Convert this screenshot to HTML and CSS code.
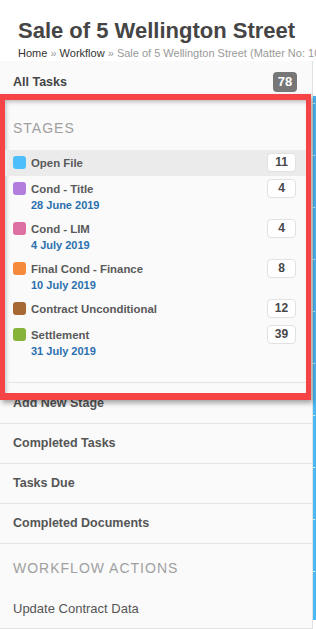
FILE: index.html
```html
<!DOCTYPE html>
<html lang="en">
<head>
    <meta charset="UTF-8">
    <meta name="viewport" content="width=device-width, initial-scale=1.0">
    <title>Sale of 5 Wellington Street - Workflow</title>
    <link rel="stylesheet" href="styles.css">
</head>
<body>
    <div class="page-head">
        <h1>Sale of 5 Wellington Street</h1>
        <div class="breadcrumb">
            <a href="#">Home</a> <span class="sep">&raquo;</span>
            <a href="#">Workflow</a> <span class="sep">&raquo;</span>
            <span class="current">Sale of 5 Wellington Street (Matter No: 1042)</span>
        </div>
    </div>

    <div class="layout">
        <nav class="sidebar">
            <div class="all-tasks">
                <span>All Tasks</span>
                <span class="total">78</span>
            </div>

            <!-- Stages dropdown, opened -->
            <div class="stages-popover">
                <div class="stages-panel">
                    <div class="section-title">Stages</div>
                    <ul class="stage-list">
                        <li class="stage active">
                            <span class="swatch blue"></span>
                            <div class="stage-text"><div class="stage-name">Open File</div></div>
                            <span class="count">11</span>
                        </li>
                        <li class="stage">
                            <span class="swatch purple"></span>
                            <div class="stage-text">
                                <div class="stage-name">Cond - Title</div>
                                <div class="stage-date">28 June 2019</div>
                            </div>
                            <span class="count">4</span>
                        </li>
                        <li class="stage">
                            <span class="swatch pink"></span>
                            <div class="stage-text">
                                <div class="stage-name">Cond - LIM</div>
                                <div class="stage-date">4 July 2019</div>
                            </div>
                            <span class="count">4</span>
                        </li>
                        <li class="stage">
                            <span class="swatch orange"></span>
                            <div class="stage-text">
                                <div class="stage-name">Final Cond - Finance</div>
                                <div class="stage-date">10 July 2019</div>
                            </div>
                            <span class="count">8</span>
                        </li>
                        <li class="stage">
                            <span class="swatch brown"></span>
                            <div class="stage-text"><div class="stage-name">Contract Unconditional</div></div>
                            <span class="count">12</span>
                        </li>
                        <li class="stage">
                            <span class="swatch green"></span>
                            <div class="stage-text">
                                <div class="stage-name">Settlement</div>
                                <div class="stage-date">31 July 2019</div>
                            </div>
                            <span class="count">39</span>
                        </li>
                    </ul>
                    <div class="panel-foot"></div>
                </div>
            </div>

            <div class="nav-item add-stage">Add New Stage</div>
            <div class="nav-item">Completed Tasks</div>
            <div class="nav-item">Tasks Due</div>
            <div class="nav-item">Completed Documents</div>

            <div class="section-title actions-title">Workflow Actions</div>
            <div class="nav-action">Update Contract Data</div>
        </nav>

        <main class="content"></main>
    </div>
</body>
</html>
```

FILE: styles.css
```css
body {
    margin: 0;
    font-family: "Liberation Sans", Arial, sans-serif;
    background-color: #fff;
    color: #555;
    width: 316px;
    height: 629px;
    overflow: hidden;
}

.page-head {
    padding: 18px 0 0 18px;
    height: 61px;
    box-sizing: border-box;
    overflow: hidden;
}

.page-head h1 {
    margin: 0;
    font-size: 22px;
    line-height: 26px;
    font-weight: bold;
    color: #454545;
    white-space: nowrap;
}

.breadcrumb {
    margin-top: 2px;
    font-size: 11px;
    line-height: 14px;
    white-space: nowrap;
    color: #999;
}

.breadcrumb a {
    color: #333;
    text-decoration: none;
}

.layout {
    display: flex;
    align-items: flex-start;
}

.sidebar {
    width: 313px;
    flex-shrink: 0;
    box-sizing: border-box;
    background-color: #fafafa;
    border-right: 1px solid #e2e2e2;
}

.content {
    flex: 1;
    margin-top: 35px;
    height: 524px;
    background-color: #4cb8f5;
    background-image: linear-gradient(to bottom, transparent 51px, rgba(255, 255, 255, 0.8) 51px);
    background-size: 2px 52px;
    background-repeat: repeat-y;
    background-position: 0 8px;
}

.all-tasks {
    display: flex;
    align-items: center;
    justify-content: space-between;
    padding: 11px 15px 2px 13px;
    font-size: 12.5px;
    font-weight: bold;
    color: #444;
}

.total {
    background-color: #777;
    color: #fff;
    border-radius: 4px;
    width: 24px;
    height: 20px;
    line-height: 20px;
    text-align: center;
    font-size: 13px;
    font-weight: bold;
}

/* red outline around the open stages dropdown */
.stages-popover {
    position: relative;
    z-index: 2;
    width: 311px;
    box-sizing: border-box;
    border: 5px solid #f64346;
    border-top-width: 6px;
    border-bottom-width: 7px;
    margin-bottom: -16px;
    box-shadow: 2px 3px 5px rgba(0, 0, 0, 0.35);
    background-color: #fafafa;
}

.stages-panel {
    box-shadow: inset 2px 3px 4px -1px rgba(0, 0, 0, 0.25);
}

.section-title {
    padding: 20px 8px 14px;
    font-size: 14px;
    line-height: 16px;
    letter-spacing: 1px;
    text-transform: uppercase;
    color: #a0a0a0;
}

.stage-list {
    list-style: none;
    margin: 0;
    padding: 0 0 20px;
}

.stage {
    display: flex;
    align-items: flex-start;
    padding: 4px 10px 4px 8px;
}

.stage.active {
    background-color: #ebebeb;
}

.swatch {
    width: 13px;
    height: 13px;
    border-radius: 3px;
    margin: 2px 5px 0 0;
    flex-shrink: 0;
}

.swatch.blue { background-color: #4cbffb; }
.swatch.purple { background-color: #b27ddd; }
.swatch.pink { background-color: #dc70a2; }
.swatch.orange { background-color: #f58a3c; }
.swatch.brown { background-color: #a66934; }
.swatch.green { background-color: #88b33a; }

.stage-text {
    flex: 1;
}

.stage-name {
    font-size: 11.4px;
    line-height: 18px;
    font-weight: bold;
    color: #595959;
}

.stage-date {
    font-size: 11px;
    line-height: 14px;
    font-weight: bold;
    color: #2b70ae;
}

.count {
    margin-top: -1px;
    width: 29px;
    height: 19px;
    box-sizing: border-box;
    border: 1px solid #e1e1e1;
    border-radius: 4px;
    background-color: #fff;
    text-align: center;
    line-height: 17px;
    font-size: 12px;
    font-weight: bold;
    color: #484848;
}

.panel-foot {
    height: 10px;
    border-top: 1px solid #e3e3e3;
}

.nav-item {
    padding: 9px 13px 10px;
    line-height: 20px;
    font-size: 12.5px;
    font-weight: bold;
    color: #555;
    border-bottom: 1px solid #e3e3e3;
}

.actions-title {
    padding: 16px 13px 13px;
}

.nav-action {
    padding: 10px 13px 9px;
    line-height: 20px;
    font-size: 13px;
    color: #555;
    border-bottom: 1px solid #e3e3e3;
}
```
